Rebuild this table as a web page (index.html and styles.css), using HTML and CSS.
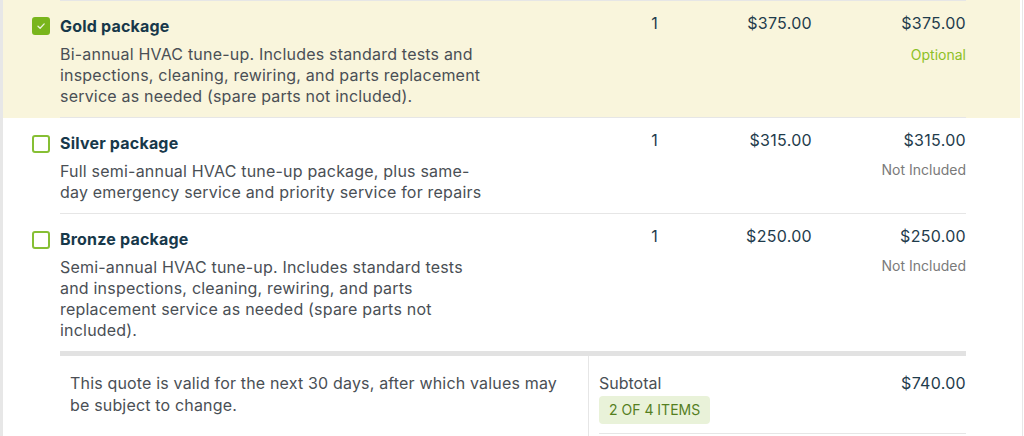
FILE: index.html
```html
<!DOCTYPE html>
<html lang="en">
<head>
<meta charset="utf-8">
<title>Quote items</title>
<link rel="stylesheet" href="styles.css">
</head>
<body>
<div class="page">
  <div class="items">
    <div class="item selected first">
      <span class="check checked">
        <svg viewBox="0 0 18 18" width="18" height="18" aria-hidden="true"><path d="M6 9.3 L8.1 11.3 L12.2 6.9" fill="none" stroke="#ffffff" stroke-opacity="0.85" stroke-width="1.3" stroke-linecap="round" stroke-linejoin="round"/></svg>
      </span>
      <div class="item-body">
        <div class="info">
          <div class="title">Gold package</div>
          <p class="desc">Bi-annual HVAC tune-up. Includes standard tests and inspections, cleaning, rewiring, and parts replacement service as needed (spare parts not included).</p>
        </div>
        <div class="num qty">1</div>
        <div class="num price">$375.00</div>
        <div class="num total">
          <div>$375.00</div>
          <div class="status optional">Optional</div>
        </div>
      </div>
    </div>
    <div class="item">
      <span class="check"></span>
      <div class="item-body">
        <div class="info">
          <div class="title">Silver package</div>
          <p class="desc">Full semi-annual HVAC tune-up package, plus same-day emergency service and priority service for repairs</p>
        </div>
        <div class="num qty">1</div>
        <div class="num price">$315.00</div>
        <div class="num total">
          <div>$315.00</div>
          <div class="status">Not Included</div>
        </div>
      </div>
    </div>
    <div class="item last">
      <span class="check"></span>
      <div class="item-body">
        <div class="info">
          <div class="title">Bronze package</div>
          <p class="desc">Semi-annual HVAC tune-up. Includes standard tests and inspections, cleaning, rewiring, and parts replacement service as needed (spare parts not included).</p>
        </div>
        <div class="num qty">1</div>
        <div class="num price">$250.00</div>
        <div class="num total">
          <div>$250.00</div>
          <div class="status">Not Included</div>
        </div>
      </div>
    </div>
  </div>
  <div class="summary">
    <div class="note">This quote is valid for the next 30 days, after which values may be subject to change.</div>
    <div class="totals">
      <div class="subtotal">
        <div class="sub-row">
          <span class="sub-label">Subtotal</span>
          <span class="sub-amount">$740.00</span>
        </div>
        <span class="badge">2 OF 4 ITEMS</span>
      </div>
    </div>
  </div>
</div>
</body>
</html>
```

FILE: styles.css
```css
* { box-sizing: border-box; }

html, body {
  margin: 0;
  padding: 0;
  background: #ffffff;
}

body {
  font-family: Inter, "Noto Sans", "Liberation Sans", sans-serif;
  color: #1c3b4b;
  width: 1024px;
  height: 436px;
  overflow: hidden;
}

.page {
  width: 1023px;
  height: 436px;
  border-left: 3px solid #e7e7e7;
  border-right: 1px solid #e7e7e7;
  padding-right: 2px;
}

.item {
  display: flex;
  align-items: flex-start;
  padding: 0 54px 0 29px;
  background: #ffffff;
}

.item.selected {
  background: #f9f5dc;
}

.check {
  flex: 0 0 18px;
  width: 18px;
  height: 18px;
  margin-top: 17px;
  margin-right: 10px;
  border: 2px solid #86bf34;
  border-radius: 3px;
  display: flex;
  align-items: center;
  justify-content: center;
}

.check.checked {
  background: #79b51c;
  border-color: #79b51c;
}

.check svg {
  flex: none;
  margin: -2px;
}

.item-body {
  flex: 1;
  display: grid;
  grid-template-columns: 444px 154px 154px 154px;
  padding: 14px 0 10px;
  border-bottom: 1px solid #e6e6e6;
}

.item.first .item-body {
  border-top: 1px solid #e6e6e6;
}

.item.last .item-body {
  border-bottom: none;
}

.info {
  padding-right: 20px;
}

.title {
  font-size: 16px;
  line-height: 22px;
  font-weight: 700;
  letter-spacing: 0.2px;
  color: #17384a;
}

.desc {
  margin: 7px 0 0;
  font-size: 16px;
  line-height: 21px;
  letter-spacing: 0.2px;
  color: #4a4f55;
}

.num {
  text-align: right;
  font-size: 16px;
  line-height: 22px;
  letter-spacing: 0.3px;
  margin-top: -3px;
  color: #1f3c4c;
}

.status {
  margin-top: 9px;
  font-size: 14px;
  line-height: 20px;
  letter-spacing: 0;
  color: #7a7a7a;
}

.status.optional {
  margin-top: 11px;
  color: #8cc026;
}

.summary {
  margin: 0 54px 0 57px;
  border-top: 5px solid #e2e2e2;
  display: grid;
  grid-template-columns: 529px 1fr;
  height: 90px;
}

.note {
  padding: 16px 20px 0 10px;
  font-size: 16px;
  line-height: 22px;
  letter-spacing: 0.17px;
  color: #4a4f55;
  border-right: 1px solid #e6e6e6;
}

.totals {
  padding: 16px 0 0 10px;
}

.subtotal {
  border-bottom: 1px solid #e6e6e6;
  padding-bottom: 9px;
}

.sub-row {
  display: flex;
  justify-content: space-between;
  font-size: 16px;
  line-height: 22px;
}

.sub-label {
  color: #4a4f55;
}

.sub-amount {
  color: #1f3c4c;
  letter-spacing: 0.3px;
}

.badge {
  display: inline-block;
  margin-top: 2px;
  height: 28px;
  padding: 0 10px;
  line-height: 28px;
  border-radius: 4px;
  background: #e9f2d9;
  color: #557f1f;
  font-size: 14px;
}
```
